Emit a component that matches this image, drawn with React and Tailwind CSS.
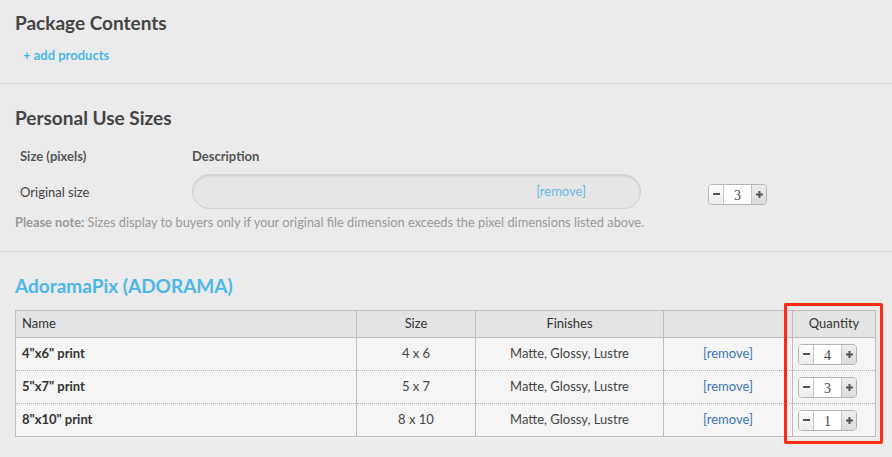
import React from "react";

function Stepper({ value }) {
  return (
    <div className="inline-flex h-[21px] w-[59px] rounded-[4px] border border-[#b4b4b4] overflow-hidden bg-white align-middle">
      <div className="w-[15px] flex items-center justify-center bg-gradient-to-b from-white to-[#ececec] border-r border-[#c4c4c4]">
        <div className="w-[7px] h-[2px] bg-[#555]" />
      </div>
      <div className="flex-1 flex items-end justify-center bg-white text-[14px] leading-[17px] text-[#444] [font-family:'Liberation_Serif',serif]">
        {value}
      </div>
      <div className="w-[15px] flex items-center justify-center bg-gradient-to-b from-[#eeeeee] to-[#dcdcdc] border-l border-[#c4c4c4]">
        <svg width="7" height="7" viewBox="0 0 7 7">
          <rect x="2.5" y="0" width="2" height="7" fill="#555" />
          <rect x="0" y="2.5" width="7" height="2" fill="#555" />
        </svg>
      </div>
    </div>
  );
}

const rows = [
  { name: '4"x6" print', size: "4 x 6", qty: 4 },
  { name: '5"x7" print', size: "5 x 7", qty: 3 },
  { name: '8"x10" print', size: "8 x 10", qty: 1 },
];

const cell =
  "border-x border-[#bcbcbc] border-t border-t-[#b0b0b0] border-dotted [border-left-style:solid] [border-right-style:solid]";

export default function App() {
  return (
    <div className="w-[892px] h-[457px] bg-[#ebebeb] overflow-hidden [font-family:Lato,'Liberation_Sans',sans-serif] text-[#444]">
      {/* Package Contents */}
      <div className="h-[84px] border-b border-[#d6d6d6] px-[15px] pt-[11px]">
        <h2 className="text-[19px] leading-[24px] font-bold text-[#444]">Package Contents</h2>
        <div className="mt-[12px] pl-[8px] text-[13px] leading-[16px] font-bold text-[#4cb7e8]">+ add products</div>
      </div>

      {/* Personal Use Sizes */}
      <div className="h-[168px] border-b border-[#d6d6d6] px-[15px] pt-[22px]">
        <h2 className="text-[19px] leading-[24px] font-bold text-[#444]">Personal Use Sizes</h2>
        <div className="mt-[18px] flex text-[13px] leading-[16px] font-bold text-[#555]">
          <div className="w-[177px] pl-[5px]">Size (pixels)</div>
          <div>Description</div>
        </div>
        <div className="mt-[10px] flex items-center h-[35px]">
          <div className="w-[177px] pl-[5px] text-[13px] leading-[16px] text-[#444]">Original size</div>
          <div className="w-[449px] h-[35px] rounded-full border border-[#d2d2d2] bg-[#e6e6e6] shadow-[inset_0_1px_2px_rgba(0,0,0,0.12)] flex items-center justify-end pr-[54px]">
            <span className="text-[13px] text-[#6ab9e2]">[remove]</span>
          </div>
          <div className="ml-[67px] mt-[2px]">
            <Stepper value={3} />
          </div>
        </div>
        <div className="mt-[5px] text-[12.8px] leading-[16px] text-[#999]">
          <span className="font-bold">Please note:</span> Sizes display to buyers only if your original file dimension exceeds the pixel dimensions listed above.
        </div>
      </div>

      {/* AdoramaPix */}
      <div className="px-[15px] pt-[22px]">
        <h2 className="text-[19px] leading-[24px] font-bold text-[#4cb7e8]">AdoramaPix (ADORAMA)</h2>
        <div className="relative mt-[12px] w-[860px]">
          <table className="w-[860px] table-fixed border-collapse text-[13px] text-[#444]">
            <colgroup>
              <col className="w-[341px]" />
              <col className="w-[119px]" />
              <col className="w-[188px]" />
              <col className="w-[129px]" />
              <col className="w-[83px]" />
            </colgroup>
            <thead>
              <tr className="h-[27px] bg-[#e4e4e4] text-[#333]">
                <th className="border border-[#bcbcbc] text-left font-normal pl-[6px]">Name</th>
                <th className="border border-[#bcbcbc] font-normal">Size</th>
                <th className="border border-[#bcbcbc] font-normal">Finishes</th>
                <th className="border border-[#bcbcbc] font-normal"></th>
                <th className="border border-[#bcbcbc] font-normal">Quantity</th>
              </tr>
            </thead>
            <tbody className="bg-[#f5f5f5]">
              {rows.map((r, i) => (
                <tr key={i} className="h-[33px]">
                  <td className={`${cell} pl-[6px] font-bold text-[#333]`}>{r.name}</td>
                  <td className={`${cell} text-center`}>{r.size}</td>
                  <td className={`${cell} text-center`}>Matte, Glossy, Lustre</td>
                  <td className={`${cell} text-center text-[#3b78b4]`}>[remove]</td>
                  <td className={`${cell} text-left pl-[5px]`}>
                    <Stepper value={r.qty} />
                  </td>
                </tr>
              ))}
              <tr className="h-0">
                <td colSpan={5} className="border-t border-[#bcbcbc] p-0"></td>
              </tr>
            </tbody>
          </table>
          <div className="absolute left-[769px] top-[-7px] w-[99px] h-[141px] border-[3px] border-[#ff2a12] rounded-[2px] pointer-events-none" />
        </div>
      </div>
    </div>
  );
}
